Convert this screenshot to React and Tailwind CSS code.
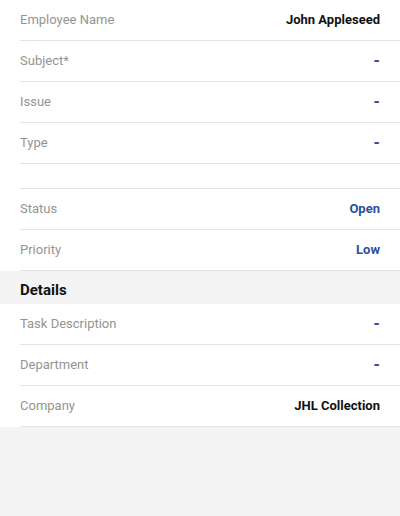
import React from 'react';

const Row = ({ label, value, tone = 'blue' }) => {
  const valueClass =
    tone === 'dark'
      ? 'text-[13px] leading-[16px] font-bold text-[#111111]'
      : value === '-'
        ? 'text-[15px] leading-[16px] font-black text-[#2d4fa0]'
        : 'text-[13px] leading-[16px] font-bold text-[#2d4fa0]';

  return (
    <div className="bg-white pl-5">
      <div className="flex h-[41px] items-center justify-between border-b border-[#e4e4e4] pr-5">
        <span className="text-[13px] leading-[16px] text-[#949494]">{label}</span>
        <span className={valueClass}>{value}</span>
      </div>
    </div>
  );
};

export default function App() {
  const top = [
    { label: 'Employee Name', value: 'John Appleseed', tone: 'dark' },
    { label: 'Subject*', value: '-' },
    { label: 'Issue', value: '-' },
    { label: 'Type', value: '-' },
  ];
  const state = [
    { label: 'Status', value: 'Open' },
    { label: 'Priority', value: 'Low' },
  ];
  const details = [
    { label: 'Task Description', value: '-' },
    { label: 'Department', value: '-' },
    { label: 'Company', value: 'JHL Collection', tone: 'dark' },
  ];

  return (
    <div className="min-h-[516px] bg-[#f4f4f4] font-['Roboto','Liberation_Sans',sans-serif]">
      {top.map((r) => (
        <Row key={r.label} {...r} />
      ))}

      {/* blank spacer row */}
      <div className="bg-white pl-5">
        <div className="h-[25px] border-b border-[#e4e4e4]" />
      </div>

      {state.map((r) => (
        <Row key={r.label} {...r} />
      ))}

      <div className="flex h-[33px] items-center px-5 pt-[6px]">
        <span className="text-[15px] font-bold text-[#111111]">Details</span>
      </div>

      {details.map((r) => (
        <Row key={r.label} {...r} />
      ))}
    </div>
  );
}
